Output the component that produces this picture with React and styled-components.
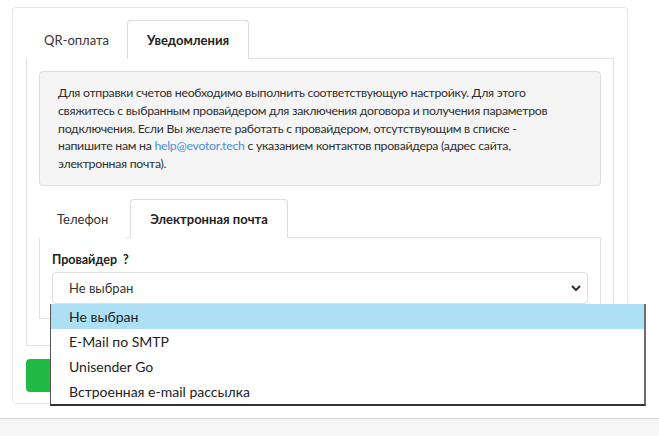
import styled, { createGlobalStyle } from 'styled-components';

const GlobalStyle = createGlobalStyle`
  html, body {
    margin: 0;
    padding: 0;
    background: #fff;
  }
  body {
    font-family: Lato, 'Open Sans', 'DejaVu Sans', sans-serif;
    font-size: 13px;
    color: #333;
  }
`;

const Page = styled.div`
  display: flex;
  flex-direction: column;
  min-height: 436px;
`;

const Main = styled.div`
  flex: 1;
  padding: 7px 31px 14px 12px;
`;

const Card = styled.div`
  border: 1px solid #e6e6e6;
  border-radius: 4px;
  padding: 12px 13px 11px 13px;
`;

const TabBar = styled.div`
  display: flex;
  align-items: flex-end;
  gap: ${p => p.$gap || 0}px;
`;

const Tab = styled.div`
  height: 38px;
  display: flex;
  align-items: center;
  padding: 0 ${p => (p.$active ? 19 : 17)}px;
  border: 1px solid ${p => (p.$active ? '#dcdcdc' : 'transparent')};
  border-bottom: none;
  border-radius: 4px 4px 0 0;
  background: #fff;
  font-weight: ${p => (p.$active ? 700 : 400)};
  color: ${p => (p.$active ? '#222' : '#333')};
  margin-bottom: -1px;
  position: relative;
`;

const Panel = styled.div`
  border: 1px solid #e2e2e2;
  padding: ${p => p.$pad};
`;

const Notice = styled.div`
  background: #f5f5f5;
  border: 1px solid #dedede;
  border-radius: 4px;
  padding: 12px 18px;
  font-size: 12.3px;
  letter-spacing: -0.28px;
  line-height: 17.8px;
  white-space: nowrap;
  color: #2e2e2e;
  margin-bottom: 13px;
`;

const Mail = styled.a`
  color: #4a90d9;
  text-decoration: none;
`;

const Label = styled.div`
  font-weight: 700;
  font-size: 12.5px;
  color: #222;
  line-height: 18px;
  margin-bottom: 3px;
  display: flex;
  gap: 6px;
`;

const Field = styled.div`
  position: relative;
`;

const SelectBox = styled.div`
  height: 32px;
  box-sizing: border-box;
  border: 1px solid #e0e0e0;
  border-radius: 4px;
  display: flex;
  align-items: center;
  justify-content: space-between;
  padding: 0 5px 0 16px;
  color: #333;
  font-size: 13px;
`;

const Options = styled.ul`
  position: absolute;
  top: 100%;
  left: -2px;
  width: 596px;
  box-sizing: border-box;
  margin: 0;
  padding: 0;
  list-style: none;
  background: #fff;
  border-left: 1px solid #555;
  border-right: 2px solid #6d6d6d;
  border-bottom: 2px solid #333;
  z-index: 2;
`;

const Option = styled.li`
  height: 25px;
  display: flex;
  align-items: center;
  padding-left: 18px;
  font-size: 14px;
  color: #222;
  background: ${p => (p.$selected ? '#ade0f5' : '#fff')};
`;

const SaveButton = styled.button`
  margin-top: 13px;
  width: 120px;
  height: 33px;
  border: none;
  border-radius: 4px;
  background: #21ba45;
  color: #fff;
  font-family: inherit;
  font-size: 13px;
  font-weight: 700;
`;

const Footer = styled.div`
  height: 17px;
  border-top: 1px solid #d6d6d6;
  background: #f6f6f6;
`;

const Chevron = () => (
  <svg width="12" height="8" viewBox="0 0 12 8">
    <polyline points="2,2 6,6 10,2" fill="none" stroke="#333" strokeWidth="2.2" />
  </svg>
);

const providers = ['Не выбран', 'E-Mail по SMTP', 'Unisender Go', 'Встроенная e-mail рассылка'];

export default function App() {
  return (
    <Page>
      <GlobalStyle />
      <Main>
        <Card>
          <TabBar>
            <Tab>QR-оплата</Tab>
            <Tab $active>Уведомления</Tab>
          </TabBar>
          <Panel $pad="12px 12px 26px 12px">
            <Notice>
              Для отправки счетов необходимо выполнить соответствующую настройку. Для этого
              <br />
              свяжитесь с выбранным провайдером для заключения договора и получения параметров
              <br />
              подключения. Если Вы желаете работать с провайдером, отсутствующим в списке -
              <br />
              напишите нам на <Mail href="#">help@evotor.tech</Mail> с указанием контактов провайдера (адрес сайта,
              <br />
              электронная почта).
            </Notice>
            <TabBar $gap={4}>
              <Tab>Телефон</Tab>
              <Tab $active>Электронная почта</Tab>
            </TabBar>
            <Panel $pad="13px 12px 14px 12px">
              <Label>
                Провайдер <span>?</span>
              </Label>
              <Field>
                <SelectBox>
                  Не выбран
                  <Chevron />
                </SelectBox>
                <Options>
                  {providers.map((name, i) => (
                    <Option key={name} $selected={i === 0}>
                      {name}
                    </Option>
                  ))}
                </Options>
              </Field>
            </Panel>
          </Panel>
          <SaveButton>Сохранить</SaveButton>
        </Card>
      </Main>
      <Footer />
    </Page>
  );
}
